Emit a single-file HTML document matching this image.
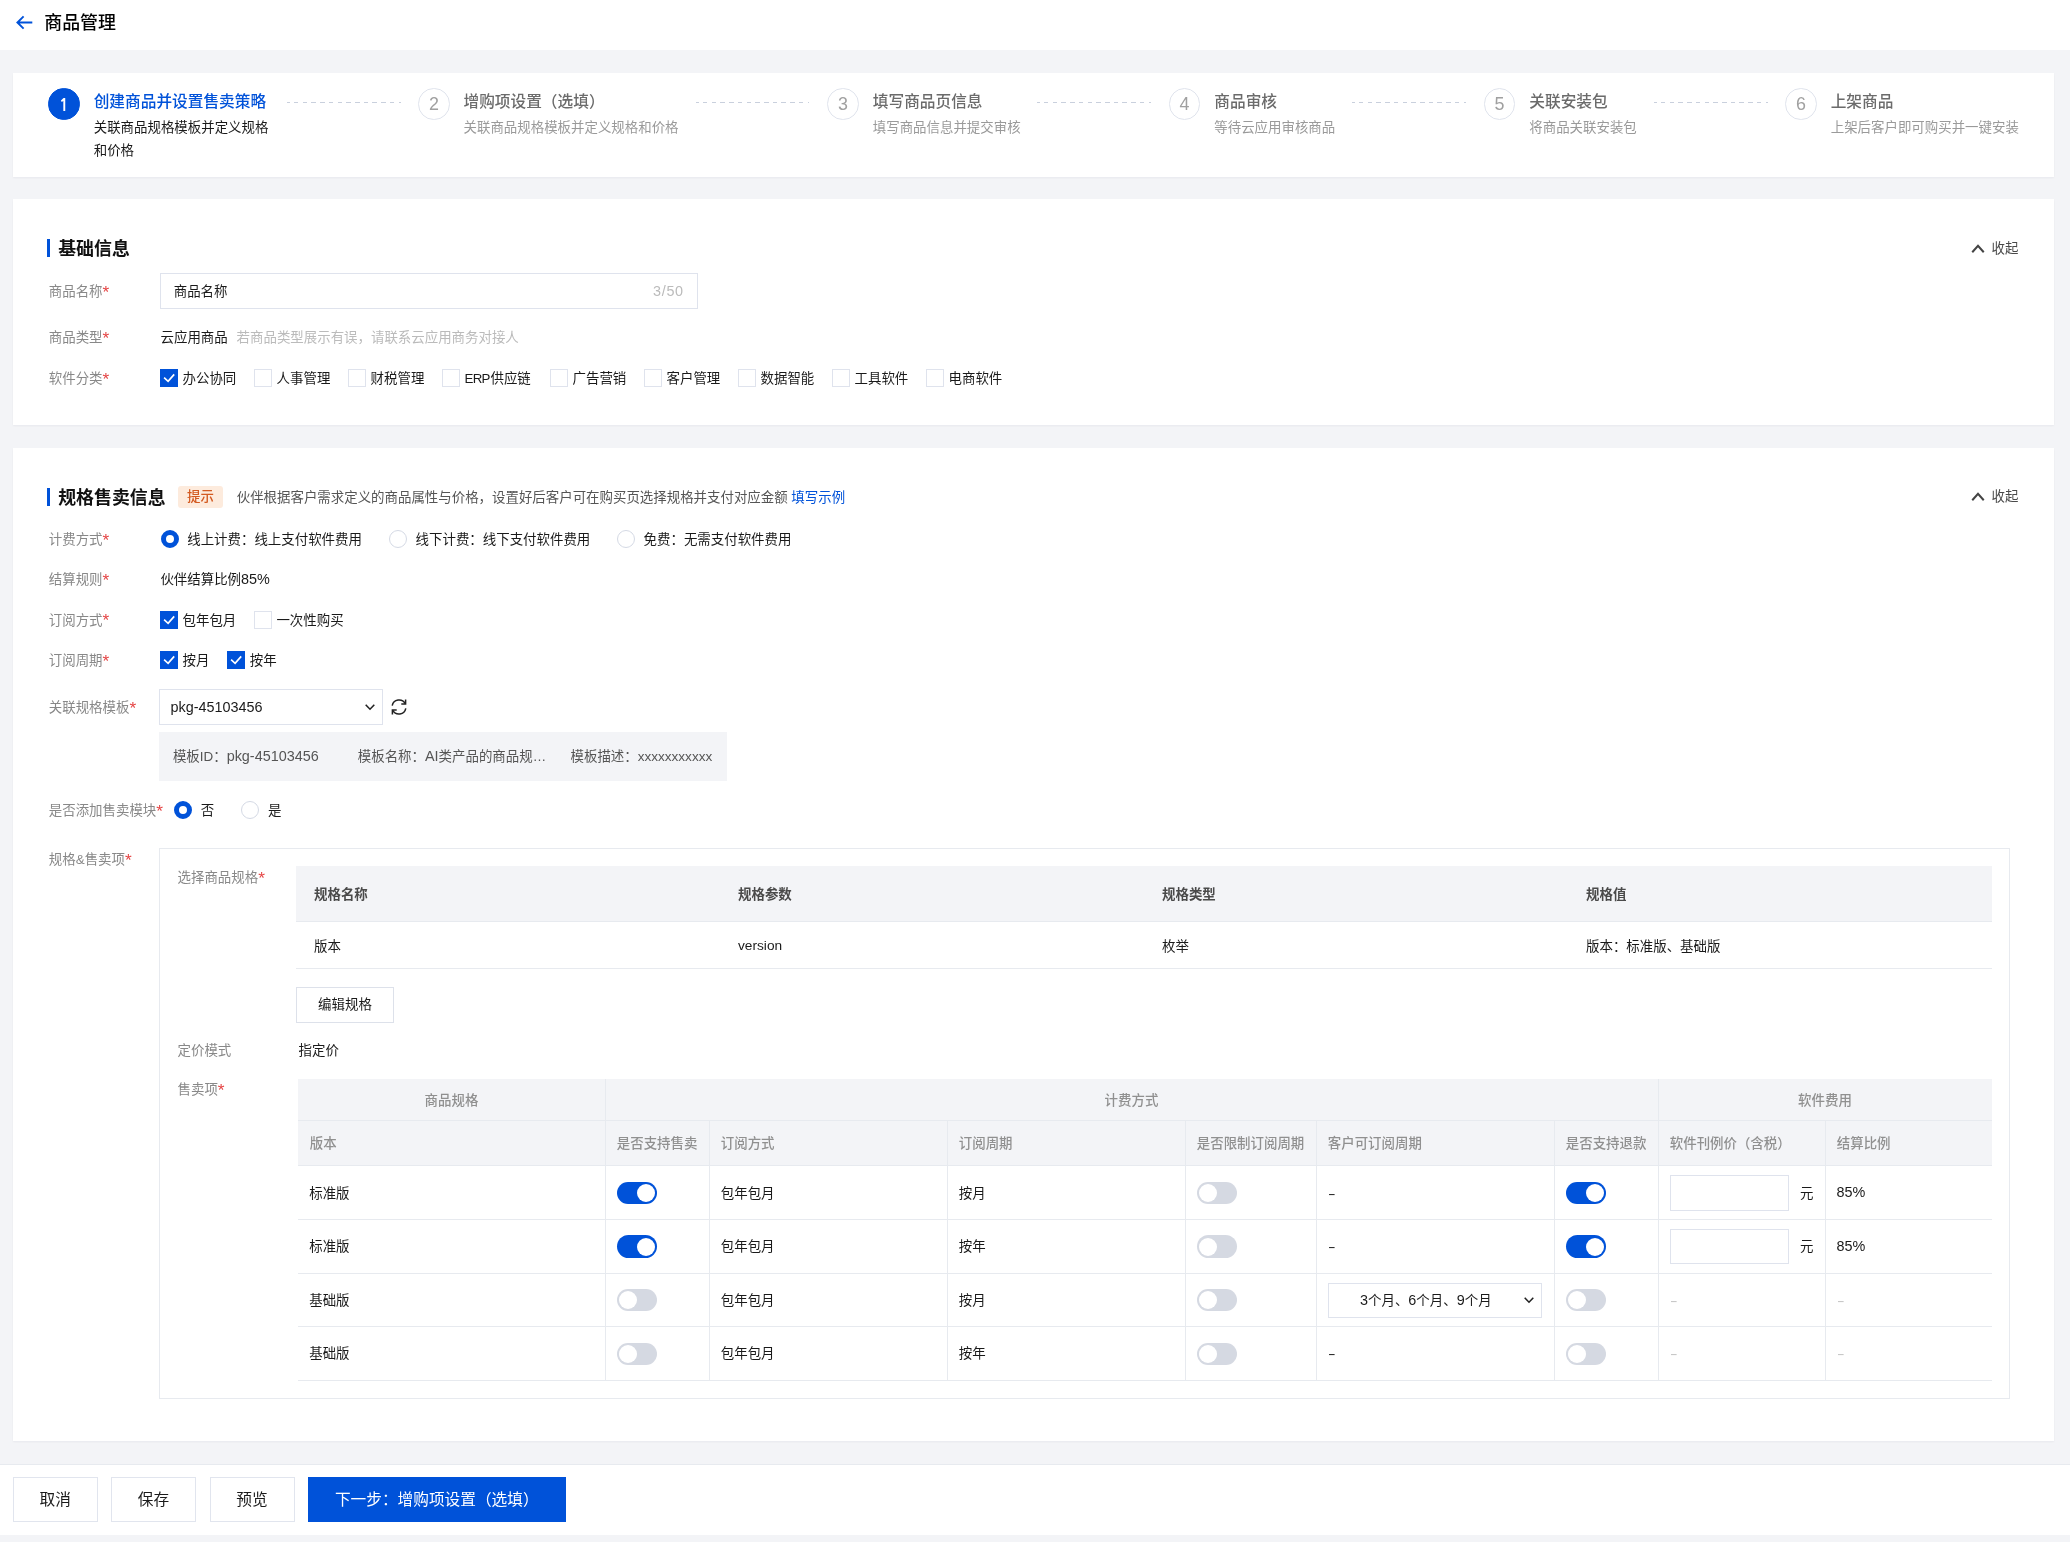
<!DOCTYPE html>
<html lang="zh-CN">
<head>
<meta charset="utf-8">
<title>商品管理</title>
<style>
html,body{margin:0;padding:0;background:#f3f4f7}
body{width:2070px;height:1542px;position:relative;overflow:hidden;background:#f3f4f7;
 font-family:"Liberation Sans","Noto Sans CJK SC",sans-serif;font-size:13.44px;color:#1a1a1a;
 -webkit-font-smoothing:antialiased}
body *{box-sizing:border-box}
#app{position:absolute;left:0;top:0;width:2070px;height:1542px;will-change:transform}
.card,.bar,.inp,.info,.tag,.panel,.btn,.t2h,.ln,.num,.dash,.hd,.ft{position:absolute}
h1,h2{margin:0;font-weight:normal}
i{font-style:normal}
.hd{background:#fff}
.ft{background:#fff;border-top:1px solid #e7eaef}
.card{background:#fff;box-shadow:0 1px 2px rgba(10,20,60,.05)}
.t{position:absolute;white-space:nowrap;line-height:20px;font-size:13.44px}
.t.c{text-align:center}
.h1{font-size:17.92px;line-height:26px;font-weight:500;color:#000}
.h2{font-size:17.92px;line-height:26px;font-weight:700;color:#111}
.bar{background:#0052d9}
.lab{color:#888}
.req{color:#e54545;font-family:"Liberation Sans",sans-serif;font-size:17.3px;line-height:0;position:relative;top:1.9px}
.l{font-size:14.4px;line-height:0}
.erp{font-size:13.3px;letter-spacing:-.75px;margin-right:.75px}
.ver{font-size:13.7px;line-height:0;position:relative;top:.6px}
.dk{color:#1a1a1a}
.mid{color:#4a4a4a}
.mid2{color:#555}
.ph{color:#bbb}
.lk{color:#0052d9}
.num{width:31.4px;height:31.4px;border-radius:50%;border:1px solid #dfe3ec;color:#a0a0a0;font-size:17.9px;line-height:30px;text-align:center;background:#fff}
.num.cur{background:#0052d9;border-color:#0052d9;color:#fff;font-family:"NanumGothic","Liberation Sans",sans-serif;font-weight:700;font-size:17px;line-height:33px}
.st{font-size:15.68px;line-height:24px;font-weight:500;color:#6b6b6b}
.st.cur{color:#0052d9}
.sd{color:#9a9a9a}
.sd.cur{color:#1a1a1a}
.dash{height:1px;background:repeating-linear-gradient(90deg,#c9d0dd 0 2.67px,transparent 2.67px 6.9px,#c9d0dd 6.9px 8.73px)}
.inp{background:#fff;border:1px solid #dfe3ed}
.info{background:#f3f4f7}
.info-t{color:#555}
.tag{background:#fdebdd;border-radius:3px;text-align:center;line-height:22px;color:#d35a21;font-weight:500;font-size:13.44px}
.cb{position:absolute;width:17.8px;height:17.8px;border:1px solid #dfe3ed;background:#fff}
.cb.on{background:#0052d9;border-color:#0052d9}
.cb svg{position:absolute;left:-1px;top:-1px}
.rd{position:absolute;width:18px;height:18px;border-radius:50%;border:1px solid #d4d9e4;background:#fff}
.rd.on{border:5.3px solid #0052d9}
.sw{position:absolute;width:40.4px;height:22.4px;border-radius:12px;background:#d5d9e2}
.sw i{position:absolute;left:2.2px;top:2.2px;width:18px;height:18px;border-radius:50%;background:#fff}
.sw.on{background:#0052d9}
.sw.on i{left:auto;right:2.2px}
.ic{position:absolute;overflow:visible}
.panel{border:1px solid #e7eaef;background:#fff}
.btn{background:#fff;border:1px solid #dde1ea;text-align:center;color:#1a1a1a}
.btn.sm{line-height:33px;font-size:13.44px}
.btn.lg{line-height:44.6px;border-color:#e1e5ee;font-size:15.68px}
.btn.pri{background:#0052d9;border-color:#0052d9;color:#fff}
.t1{position:absolute;border-collapse:collapse;table-layout:fixed;font-size:13.44px}
.t1 th{height:55.6px;background:#f3f4f7;text-align:left;padding:0 0 1.5px 18px;font-weight:700;color:#4a4a4a;border-bottom:1px solid #e7eaef}
.t1 td{height:47px;padding:0 0 1px 18px;color:#1a1a1a;border-bottom:1px solid #e7eaef}
.t2h{background:#f3f4f7}
.ln{background:#e7eaef}
.th{color:#909090;font-weight:500}
.hy{transform:scaleX(1.7);transform-origin:0 50%}
.hy.lt{color:#c4c4c4}
</style>
</head>
<body>
<div id="app">
<header class="hd" style="left:0;top:0;width:2070px;height:50px">
<svg class="ic" style="left:14px;top:13px" width="20" height="20" viewBox="0 0 20 20"><path d="M9.6 3.4 L3.4 9.5 L9.6 15.6 M3.6 9.5 H18.3" fill="none" stroke="#0052d9" stroke-width="1.9"/></svg>
<h1 class="t h1" style="left:44.3px;top:10.4px;">商品管理</h1>
</header>
<section>
<div class="card" style="left:12.65px;top:72.7px;width:2041.35px;height:104.1px;"></div>
<nav class="steps">
<span class="num cur" style="left:48.3px;top:88.4px">1</span>
<span class="t st cur" style="left:93.7px;top:89.5px;">创建商品并设置售卖策略</span>
<span class="t sd cur" style="left:93.7px;top:118.2px;">关联商品规格模板并定义规格</span>
<span class="t sd cur" style="left:93.7px;top:140.6px;">和价格</span>
<i class="dash" style="left:287px;top:101.6px;width:113.5px"></i>
<span class="num" style="left:418.3px;top:88.4px">2</span>
<span class="t st" style="left:463.5px;top:89.5px;">增购项设置（选填）</span>
<span class="t sd" style="left:463.5px;top:118.2px;">关联商品规格模板并定义规格和价格</span>
<i class="dash" style="left:695.5px;top:101.6px;width:113.5px"></i>
<span class="num" style="left:827.3px;top:88.4px">3</span>
<span class="t st" style="left:872.8px;top:89.5px;">填写商品页信息</span>
<span class="t sd" style="left:872.8px;top:118.2px;">填写商品信息并提交审核</span>
<i class="dash" style="left:1037px;top:101.6px;width:114px"></i>
<span class="num" style="left:1168.9px;top:88.4px">4</span>
<span class="t st" style="left:1214.3px;top:89.5px;">商品审核</span>
<span class="t sd" style="left:1214.3px;top:118.2px;">等待云应用审核商品</span>
<i class="dash" style="left:1352px;top:101.6px;width:114px"></i>
<span class="num" style="left:1483.9px;top:88.4px">5</span>
<span class="t st" style="left:1529.3px;top:89.5px;">关联安装包</span>
<span class="t sd" style="left:1529.3px;top:118.2px;">将商品关联安装包</span>
<i class="dash" style="left:1654px;top:101.6px;width:113.5px"></i>
<span class="num" style="left:1785.3px;top:88.4px">6</span>
<span class="t st" style="left:1830.7px;top:89.5px;">上架商品</span>
<span class="t sd" style="left:1830.7px;top:118.2px;">上架后客户即可购买并一键安装</span>
</nav>
</section>
<section>
<div class="card" style="left:12.65px;top:199.2px;width:2041.35px;height:225.8px;"></div>
<div class="bar" style="left:47.2px;top:239.3px;width:2.6px;height:18px;"></div>
<h2 class="t h2" style="left:58.2px;top:236.1px;">基础信息</h2>
<svg class="ic" style="left:1970px;top:240.8px" width="16" height="16" viewBox="-8 -8 16 16"><path d="M-5.75 3.25 L0 -3.25 L5.75 3.25" fill="none" stroke="#444" stroke-width="2"/></svg>
<span class="t mid" style="left:1991.6px;top:238.8px;">收起</span>
<label class="t lab" style="left:48.8px;top:281.8px;">商品名称<i class="req">*</i></label>
<div class="inp" style="left:160px;top:273px;width:537.6px;height:35.7px;"></div>
<span class="t dk" style="left:173.7px;top:281.8px;">商品名称</span>
<span class="t ph" style="left:653px;top:281.8px;letter-spacing:.7px"><span class="l">3/50</span></span>
<label class="t lab" style="left:48.8px;top:328.2px;">商品类型<i class="req">*</i></label>
<span class="t dk" style="left:160.5px;top:328.2px;">云应用商品</span>
<span class="t ph" style="left:236.6px;top:328.2px;">若商品类型展示有误，请联系云应用商务对接人</span>
<label class="t lab" style="left:48.8px;top:368.8px;">软件分类<i class="req">*</i></label>
<span class="cb on" style="left:160.2px;top:369.3px"><svg viewBox="0 0 18 18" width="18" height="18"><path d="M4.1 8.7 L8.1 12.3 L14.2 5.4" fill="none" stroke="#fff" stroke-width="1.65"/></svg></span>
<span class="t dk" style="left:182.5px;top:369.0px;">办公协同</span>
<span class="cb" style="left:254.3px;top:369.3px"></span>
<span class="t dk" style="left:276.6px;top:369.0px;">人事管理</span>
<span class="cb" style="left:348.3px;top:369.3px"></span>
<span class="t dk" style="left:370.6px;top:369.0px;">财税管理</span>
<span class="cb" style="left:442.3px;top:369.3px"></span>
<span class="t dk" style="left:464.6px;top:369.0px;"><span class="erp">ERP</span>供应链</span>
<span class="cb" style="left:550.2px;top:369.3px"></span>
<span class="t dk" style="left:572.5px;top:369.0px;">广告营销</span>
<span class="cb" style="left:644.2px;top:369.3px"></span>
<span class="t dk" style="left:666.5px;top:369.0px;">客户管理</span>
<span class="cb" style="left:738.2px;top:369.3px"></span>
<span class="t dk" style="left:760.5px;top:369.0px;">数据智能</span>
<span class="cb" style="left:832.2px;top:369.3px"></span>
<span class="t dk" style="left:854.5px;top:369.0px;">工具软件</span>
<span class="cb" style="left:926.2px;top:369.3px"></span>
<span class="t dk" style="left:948.5px;top:369.0px;">电商软件</span>
</section>
<section>
<div class="card" style="left:12.65px;top:448px;width:2041.35px;height:993px;"></div>
<div class="bar" style="left:47.2px;top:488px;width:2.6px;height:18px;"></div>
<h2 class="t h2" style="left:58.2px;top:484.8px;">规格售卖信息</h2>
<svg class="ic" style="left:1970px;top:489.40000000000003px" width="16" height="16" viewBox="-8 -8 16 16"><path d="M-5.75 3.25 L0 -3.25 L5.75 3.25" fill="none" stroke="#444" stroke-width="2"/></svg>
<span class="t mid" style="left:1991.6px;top:487.4px;">收起</span>
<div class="tag" style="left:178.3px;top:485.8px;width:44.5px;height:22px;"><span>提示</span></div>
<span class="t mid2" style="left:236.7px;top:487.8px;">伙伴根据客户需求定义的商品属性与价格，设置好后客户可在购买页选择规格并支付对应金额 <a class="lk">填写示例</a></span>
<label class="t lab" style="left:48.8px;top:530.0px;">计费方式<i class="req">*</i></label>
<span class="rd on" style="left:160.6px;top:530.2px"></span>
<span class="t dk" style="left:187.2px;top:530.0px;">线上计费：线上支付软件费用</span>
<span class="rd" style="left:389.0px;top:530.2px"></span>
<span class="t dk" style="left:415.6px;top:530.0px;">线下计费：线下支付软件费用</span>
<span class="rd" style="left:617.0px;top:530.2px"></span>
<span class="t dk" style="left:643.6px;top:530.0px;">免费：无需支付软件费用</span>
<label class="t lab" style="left:48.8px;top:570.3px;">结算规则<i class="req">*</i></label>
<span class="t dk" style="left:160.4px;top:570.3px;">伙伴结算比例<span class="l">85%</span></span>
<label class="t lab" style="left:48.8px;top:610.5px;">订阅方式<i class="req">*</i></label>
<span class="cb on" style="left:160.2px;top:611.0px"><svg viewBox="0 0 18 18" width="18" height="18"><path d="M4.1 8.7 L8.1 12.3 L14.2 5.4" fill="none" stroke="#fff" stroke-width="1.65"/></svg></span>
<span class="t dk" style="left:182.5px;top:610.7px;">包年包月</span>
<span class="cb" style="left:254.1px;top:611.0px"></span>
<span class="t dk" style="left:276.4px;top:610.7px;">一次性购买</span>
<label class="t lab" style="left:48.8px;top:650.8px;">订阅周期<i class="req">*</i></label>
<span class="cb on" style="left:160.2px;top:651.3px"><svg viewBox="0 0 18 18" width="18" height="18"><path d="M4.1 8.7 L8.1 12.3 L14.2 5.4" fill="none" stroke="#fff" stroke-width="1.65"/></svg></span>
<span class="t dk" style="left:182.5px;top:651.0px;">按月</span>
<span class="cb on" style="left:227.4px;top:651.3px"><svg viewBox="0 0 18 18" width="18" height="18"><path d="M4.1 8.7 L8.1 12.3 L14.2 5.4" fill="none" stroke="#fff" stroke-width="1.65"/></svg></span>
<span class="t dk" style="left:249.70000000000002px;top:651.0px;">按年</span>
<label class="t lab" style="left:48.8px;top:698.2px;">关联规格模板<i class="req">*</i></label>
<div class="inp" style="left:159.4px;top:689.4px;width:223.2px;height:35.2px;"></div>
<span class="t dk" style="left:170.6px;top:698.2px;"><span class="l">pkg-45103456</span></span>
<svg class="ic" style="left:361.5px;top:699px" width="16" height="16" viewBox="-8 -8 16 16"><path d="M-4.3 -2.25 L0 2.25 L4.3 -2.25" fill="none" stroke="#222" stroke-width="1.55"/></svg>
<svg class="ic" style="left:388.7px;top:697.2px" width="20" height="20" viewBox="0 0 20 20"><g fill="none" stroke="#222" stroke-width="1.5"><path d="M3.2 8.6 A7 7 0 0 1 16.2 6.6"/><path d="M16.8 11.4 A7 7 0 0 1 3.8 13.4"/><path d="M16.6 2.6 V6.9 H12.3"/><path d="M3.4 17.4 V13.1 H7.7"/></g></svg>
<div class="info" style="left:159.3px;top:732px;width:567.8px;height:48.7px;"></div>
<span class="t info-t" style="left:172.9px;top:747.0px;">模板ID：<span class="l">pkg-45103456</span></span>
<span class="t info-t" style="left:357.8px;top:747.0px;">模板名称：<span class="l">AI</span>类产品的商品规…</span>
<span class="t info-t" style="left:570.5px;top:747.0px;">模板描述：<span style="font-size:13.55px">xxxxxxxxxxx</span></span>
<label class="t lab" style="left:48.8px;top:801.0px;">是否添加售卖模块<i class="req">*</i></label>
<span class="rd on" style="left:174.2px;top:801.2px"></span>
<span class="t dk" style="left:200.8px;top:801.0px;">否</span>
<span class="rd" style="left:241.3px;top:801.2px"></span>
<span class="t dk" style="left:267.9px;top:801.0px;">是</span>
<label class="t lab" style="left:48.8px;top:849.8px;">规格&amp;售卖项<i class="req">*</i></label>
<div class="panel" style="left:159.3px;top:848.3px;width:1850.7px;height:551px;"></div>
<label class="t lab" style="left:177.5px;top:868.0px;">选择商品规格<i class="req">*</i></label>
<table class="t1" style="left:296px;top:866px;width:1696px"><thead><tr><th>规格名称</th><th>规格参数</th><th>规格类型</th><th>规格值</th></tr></thead><tbody><tr><td>版本</td><td><span class="ver">version</span></td><td>枚举</td><td>版本：标准版、基础版</td></tr></tbody></table>
<div class="btn sm" style="left:296px;top:987.2px;width:98px;height:35.4px;"><span>编辑规格</span></div>
<label class="t lab" style="left:177.5px;top:1041.3px;">定价模式</label>
<span class="t dk" style="left:298.5px;top:1041.3px;">指定价</span>
<label class="t lab" style="left:177.5px;top:1080.3px;">售卖项<i class="req">*</i></label>
<div class="t2" role="table">
<div class="t2h" style="left:298px;top:1079px;width:1694px;height:86.59999999999991px;"></div>
<div class="ln" style="left:298px;top:1120.1px;width:1694px;height:1px;"></div>
<div class="ln" style="left:298px;top:1165.1px;width:1694px;height:1px;"></div>
<div class="ln" style="left:298px;top:1218.9px;width:1694px;height:1px;"></div>
<div class="ln" style="left:298px;top:1272.5px;width:1694px;height:1px;"></div>
<div class="ln" style="left:298px;top:1326.1px;width:1694px;height:1px;"></div>
<div class="ln" style="left:298px;top:1379.7px;width:1694px;height:1px;"></div>
<div class="ln" style="left:604.5px;top:1079px;width:1px;height:301.20000000000005px;"></div>
<div class="ln" style="left:1657.5px;top:1079px;width:1px;height:301.20000000000005px;"></div>
<div class="ln" style="left:708.5px;top:1120.6px;width:1px;height:259.60000000000014px;"></div>
<div class="ln" style="left:946.5px;top:1120.6px;width:1px;height:259.60000000000014px;"></div>
<div class="ln" style="left:1184.5px;top:1120.6px;width:1px;height:259.60000000000014px;"></div>
<div class="ln" style="left:1315.5px;top:1120.6px;width:1px;height:259.60000000000014px;"></div>
<div class="ln" style="left:1553.5px;top:1120.6px;width:1px;height:259.60000000000014px;"></div>
<div class="ln" style="left:1824.5px;top:1120.6px;width:1px;height:259.60000000000014px;"></div>
<span class="t c th" style="left:301.5px;width:300px;top:1090.8px;">商品规格</span>
<span class="t c th" style="left:981.5px;width:300px;top:1090.8px;">计费方式</span>
<span class="t c th" style="left:1675.0px;width:300px;top:1090.8px;">软件费用</span>
<span class="t th" style="left:309.8px;top:1134.1px;">版本</span>
<span class="t th" style="left:616.8px;top:1134.1px;">是否支持售卖</span>
<span class="t th" style="left:720.8px;top:1134.1px;">订阅方式</span>
<span class="t th" style="left:958.8px;top:1134.1px;">订阅周期</span>
<span class="t th" style="left:1196.8px;top:1134.1px;">是否限制订阅周期</span>
<span class="t th" style="left:1327.8px;top:1134.1px;">客户可订阅周期</span>
<span class="t th" style="left:1565.8px;top:1134.1px;">是否支持退款</span>
<span class="t th" style="left:1669.8px;top:1134.1px;">软件刊例价（含税）</span>
<span class="t th" style="left:1836.8px;top:1134.1px;">结算比例</span>
<span class="t dk" style="left:309.2px;top:1183.6px;">标准版</span>
<span class="sw on" style="left:616.5px;top:1181.8px"><i></i></span>
<span class="t dk" style="left:720.8px;top:1183.6px;">包年包月</span>
<span class="t dk" style="left:958.8px;top:1183.6px;">按月</span>
<span class="sw" style="left:1196.5px;top:1181.8px"><i></i></span>
<span class="t dk hy" style="left:1328.4px;top:1183.6px;">-</span>
<span class="sw on" style="left:1565.5px;top:1181.8px"><i></i></span>
<div class="inp" style="left:1670px;top:1175.2px;width:118.5px;height:35.6px;"></div>
<span class="t dk" style="left:1800px;top:1183.6px;">元</span>
<span class="t dk" style="left:1836.6px;top:1183.0px;"><span class="l">85%</span></span>
<span class="t dk" style="left:309.2px;top:1237.2px;">标准版</span>
<span class="sw on" style="left:616.5px;top:1235.4px"><i></i></span>
<span class="t dk" style="left:720.8px;top:1237.2px;">包年包月</span>
<span class="t dk" style="left:958.8px;top:1237.2px;">按年</span>
<span class="sw" style="left:1196.5px;top:1235.4px"><i></i></span>
<span class="t dk hy" style="left:1328.4px;top:1237.2px;">-</span>
<span class="sw on" style="left:1565.5px;top:1235.4px"><i></i></span>
<div class="inp" style="left:1670px;top:1228.8px;width:118.5px;height:35.6px;"></div>
<span class="t dk" style="left:1800px;top:1237.2px;">元</span>
<span class="t dk" style="left:1836.6px;top:1236.6px;"><span class="l">85%</span></span>
<span class="t dk" style="left:309.2px;top:1290.8px;">基础版</span>
<span class="sw" style="left:616.5px;top:1289.0px"><i></i></span>
<span class="t dk" style="left:720.8px;top:1290.8px;">包年包月</span>
<span class="t dk" style="left:958.8px;top:1290.8px;">按月</span>
<span class="sw" style="left:1196.5px;top:1289.0px"><i></i></span>
<div class="inp" style="left:1328px;top:1282.6px;width:213.6px;height:35.2px;"></div>
<span class="t c dk" style="left:1275.8px;width:300px;top:1290.8px;"><span class="l">3</span>个月、<span class="l">6</span>个月、<span class="l">9</span>个月</span>
<svg class="ic" style="left:1521.3px;top:1292.4px" width="16" height="16" viewBox="-8 -8 16 16"><path d="M-4.3 -2.25 L0 2.25 L4.3 -2.25" fill="none" stroke="#222" stroke-width="1.55"/></svg>
<span class="sw" style="left:1565.5px;top:1289.0px"><i></i></span>
<span class="t hy lt" style="left:1670px;top:1290.8px;">-</span>
<span class="t hy lt" style="left:1837px;top:1290.8px;">-</span>
<span class="t dk" style="left:309.2px;top:1344.4px;">基础版</span>
<span class="sw" style="left:616.5px;top:1342.6px"><i></i></span>
<span class="t dk" style="left:720.8px;top:1344.4px;">包年包月</span>
<span class="t dk" style="left:958.8px;top:1344.4px;">按年</span>
<span class="sw" style="left:1196.5px;top:1342.6px"><i></i></span>
<span class="t dk hy" style="left:1328.4px;top:1344.4px;">-</span>
<span class="sw" style="left:1565.5px;top:1342.6px"><i></i></span>
<span class="t hy lt" style="left:1670px;top:1344.4px;">-</span>
<span class="t hy lt" style="left:1837px;top:1344.4px;">-</span>
</div>
</section>
<footer class="ft" style="left:0;top:1464.4px;width:2070px;height:70.6px">
<div class="btn lg" style="left:13px;top:12px;width:84.5px;height:44.4px;"><span>取消</span></div>
<div class="btn lg" style="left:111px;top:12px;width:85px;height:44.4px;"><span>保存</span></div>
<div class="btn lg" style="left:209.5px;top:12px;width:85px;height:44.4px;"><span>预览</span></div>
<div class="btn lg pri" style="left:308px;top:12px;width:257.5px;height:44.4px;"><span>下一步：增购项设置（选填）</span></div>
</footer>
</div>
</body>
</html>
